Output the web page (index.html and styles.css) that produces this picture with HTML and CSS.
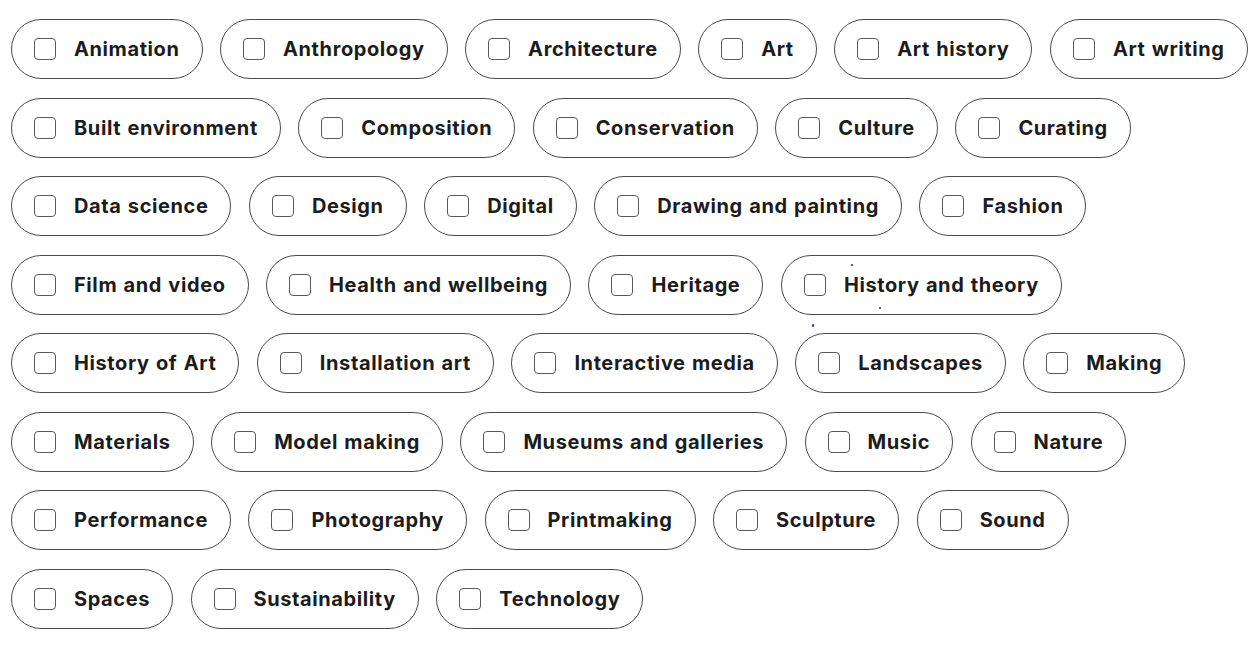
FILE: index.html
```html
<!DOCTYPE html>
<html lang="en">
<head>
<meta charset="utf-8">
<title>Subjects</title>
<link rel="stylesheet" href="styles.css">
</head>
<body>
<div class="tags">
  <div class="row">
    <label class="tag"><span class="box"></span><span class="name">Animation</span></label>
    <label class="tag"><span class="box"></span><span class="name">Anthropology</span></label>
    <label class="tag"><span class="box"></span><span class="name">Architecture</span></label>
    <label class="tag"><span class="box"></span><span class="name">Art</span></label>
    <label class="tag"><span class="box"></span><span class="name">Art history</span></label>
    <label class="tag"><span class="box"></span><span class="name">Art writing</span></label>
  </div>
  <div class="row">
    <label class="tag"><span class="box"></span><span class="name">Built environment</span></label>
    <label class="tag"><span class="box"></span><span class="name">Composition</span></label>
    <label class="tag"><span class="box"></span><span class="name">Conservation</span></label>
    <label class="tag"><span class="box"></span><span class="name">Culture</span></label>
    <label class="tag"><span class="box"></span><span class="name">Curating</span></label>
  </div>
  <div class="row">
    <label class="tag"><span class="box"></span><span class="name">Data science</span></label>
    <label class="tag"><span class="box"></span><span class="name">Design</span></label>
    <label class="tag"><span class="box"></span><span class="name">Digital</span></label>
    <label class="tag"><span class="box"></span><span class="name">Drawing and painting</span></label>
    <label class="tag"><span class="box"></span><span class="name">Fashion</span></label>
  </div>
  <div class="row">
    <label class="tag"><span class="box"></span><span class="name">Film and video</span></label>
    <label class="tag"><span class="box"></span><span class="name">Health and wellbeing</span></label>
    <label class="tag"><span class="box"></span><span class="name">Heritage</span></label>
    <label class="tag"><span class="box"></span><span class="name">History and theory</span></label>
  </div>
  <div class="row">
    <label class="tag"><span class="box"></span><span class="name">History of Art</span></label>
    <label class="tag"><span class="box"></span><span class="name">Installation art</span></label>
    <label class="tag"><span class="box"></span><span class="name">Interactive media</span></label>
    <label class="tag"><span class="box"></span><span class="name">Landscapes</span></label>
    <label class="tag"><span class="box"></span><span class="name">Making</span></label>
  </div>
  <div class="row">
    <label class="tag"><span class="box"></span><span class="name">Materials</span></label>
    <label class="tag"><span class="box"></span><span class="name">Model making</span></label>
    <label class="tag"><span class="box"></span><span class="name">Museums and galleries</span></label>
    <label class="tag"><span class="box"></span><span class="name">Music</span></label>
    <label class="tag"><span class="box"></span><span class="name">Nature</span></label>
  </div>
  <div class="row">
    <label class="tag"><span class="box"></span><span class="name">Performance</span></label>
    <label class="tag"><span class="box"></span><span class="name">Photography</span></label>
    <label class="tag"><span class="box"></span><span class="name">Printmaking</span></label>
    <label class="tag"><span class="box"></span><span class="name">Sculpture</span></label>
    <label class="tag"><span class="box"></span><span class="name">Sound</span></label>
  </div>
  <div class="row">
    <label class="tag"><span class="box"></span><span class="name">Spaces</span></label>
    <label class="tag"><span class="box"></span><span class="name">Sustainability</span></label>
    <label class="tag"><span class="box"></span><span class="name">Technology</span></label>
  </div>
</div>
<span class="speck speck-a"></span>
<span class="speck speck-b"></span>
<span class="speck speck-c"></span>
</body>
</html>
```
FILE: styles.css
```css
html, body {
  margin: 0;
  padding: 0;
  background: #ffffff;
}
body {
  position: relative;
  font-family: Inter, "Noto Sans", sans-serif;
  color: #1c1c1c;
}
.tags {
  display: flex;
  flex-direction: column;
  row-gap: 18.5px;
  padding: 19px 0 0 11px;
}
.row {
  display: flex;
  column-gap: 17.5px;
}
.tag {
  display: flex;
  align-items: center;
  gap: 18px;
  height: 60px;
  box-sizing: border-box;
  padding: 0 22px;
  border: 1px solid #4a4a4a;
  border-radius: 30px;
  flex: none;
}
.box {
  width: 22px;
  height: 22px;
  box-sizing: border-box;
  border: 1.5px solid #5a5a5a;
  border-radius: 4px;
  flex: none;
}
.name {
  font-size: 20px;
  font-weight: 700;
  letter-spacing: 0.6px;
  word-spacing: 1px;
  white-space: nowrap;
}
.speck {
  position: absolute;
  width: 2px;
  height: 2px;
  background: #2a2a70;
  border-radius: 1px;
}
.speck-a { left: 851px; top: 264px; }
.speck-b { left: 879px; top: 307px; }
.speck-c { left: 812px; top: 324px; height: 3px; background: #3030a0; }
```
